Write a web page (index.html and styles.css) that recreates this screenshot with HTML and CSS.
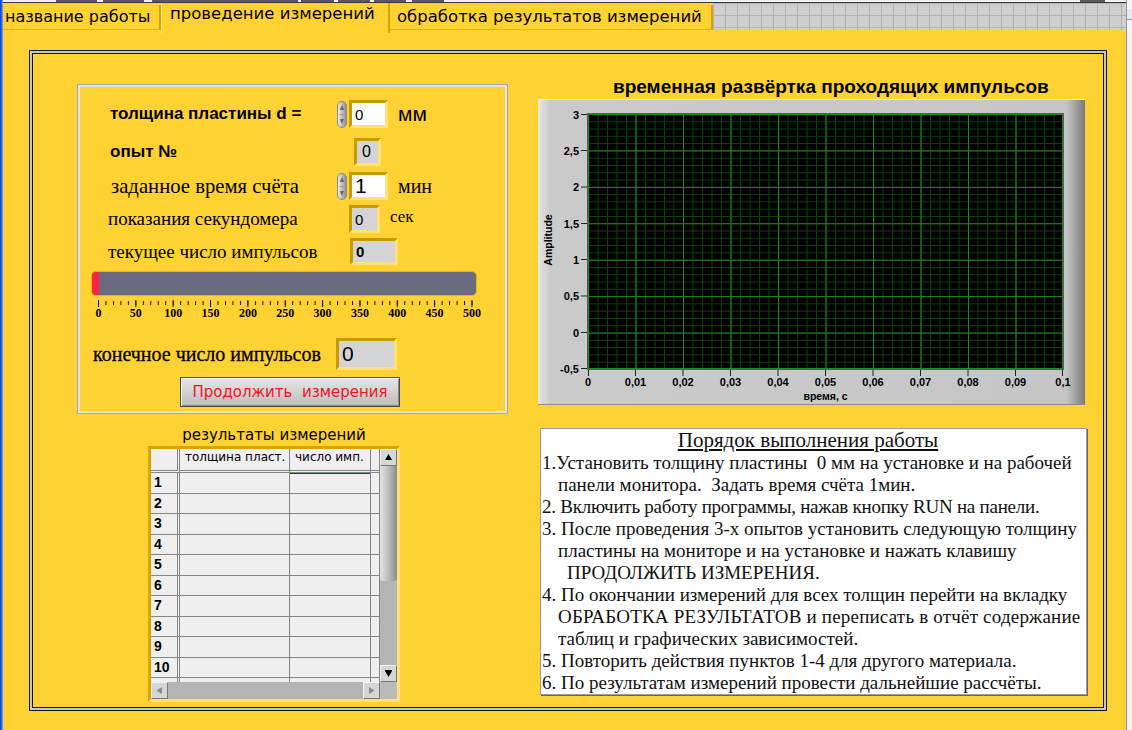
FILE: index.html
```html
<!DOCTYPE html>
<html lang="ru">
<head>
<meta charset="UTF-8">
<title>проведение измерений</title>
<link rel="stylesheet" href="styles.css">
</head>
<body>

<div class="edge-left"></div>

<div class="app">
	<div class="topline">
		<span class="seg" style="margin-left:53px;width:41px"></span>
		<span class="seg" style="margin-left:6px;width:41px"></span>
		<span class="seg" style="margin-left:8px;width:146px"></span>
		<span class="seg" style="margin-left:3px;width:33px"></span>
		<span class="seg" style="margin-left:4px;width:32px"></span>
		<span class="seg" style="margin-left:4px;width:32px"></span>
		<span class="seg" style="margin-left:6px;width:32px"></span>
		<span class="seg" style="margin-left:636px;width:25px"></span>
	</div>

	<!-- tabs -->
	<div class="tabbar">
		<div class="tab first">название работы</div>
		<div class="tab active">проведение измерений</div>
		<div class="tab last">обработка результатов измерений</div>
		<div class="tab-fill"></div>
	</div>

	<div class="panel">
		<div class="frame">

			<!-- left: controls and table -->
			<div class="col-left">
				<div class="ctrl-box">
					<div class="row r1">
						<span class="lbl b">толщина пластины d =</span>
						<svg class="spin" viewBox="0 0 10 27">
							<defs><linearGradient id="sp1" x1="0" x2="1"><stop offset="0" stop-color="#f2f2f2"/><stop offset="1" stop-color="#8a8a8a"/></linearGradient></defs>
							<rect x="0.5" y="0.5" width="9" height="26" rx="4.5" fill="url(#sp1)" stroke="#8c8c8c"/>
							<path d="M5 4L2.8 9h4.4z" fill="#6e6e6e"/>
							<path d="M2 13.5h6" stroke="#9a9a9a"/>
							<path d="M5 23L2.8 18h4.4z" fill="#6e6e6e"/>
						</svg>
						<span class="num ctl w39">0</span>
						<span class="unit mm">мм</span>
					</div>
					<div class="row r2">
						<span class="lbl b">опыт №</span>
						<span class="num w27 f16">0</span>
					</div>
					<div class="row r3">
						<span class="lbl s wide">заданное время счёта</span>
						<svg class="spin" viewBox="0 0 10 27">
							<defs><linearGradient id="sp2" x1="0" x2="1"><stop offset="0" stop-color="#f2f2f2"/><stop offset="1" stop-color="#8a8a8a"/></linearGradient></defs>
							<rect x="0.5" y="0.5" width="9" height="26" rx="4.5" fill="url(#sp2)" stroke="#8c8c8c"/>
							<path d="M5 4L2.8 9h4.4z" fill="#6e6e6e"/>
							<path d="M2 13.5h6" stroke="#9a9a9a"/>
							<path d="M5 23L2.8 18h4.4z" fill="#6e6e6e"/>
						</svg>
						<span class="num ctl w39 big">1</span>
						<span class="unit s">мин</span>
					</div>
					<div class="row r4">
						<span class="lbl s">показания секундомера</span>
						<span class="num w31">0</span>
						<span class="unit s sm">сек</span>
					</div>
					<div class="row r5">
						<span class="lbl s">текущее число импульсов</span>
						<span class="num w48 bold">0</span>
					</div>

					<div class="bar"><div class="bar-fill"></div></div>
					<svg class="scale" viewBox="0 0 410 22">
						<defs>
							<pattern id="tk-min" x="18" y="0" width="7.47" height="22" patternUnits="userSpaceOnUse">
								<path d="M0 2V6" stroke="#111" stroke-width="2"/>
							</pattern>
							<pattern id="tk-maj" x="18" y="0" width="37.35" height="22" patternUnits="userSpaceOnUse">
								<path d="M0 1V8" stroke="#111" stroke-width="2"/>
							</pattern>
						</defs>
						<rect x="18" y="0" width="375" height="9" fill="url(#tk-min)"/>
						<rect x="18" y="0" width="375" height="9" fill="url(#tk-maj)"/>
						<g class="scale-lbl" text-anchor="middle">
							<text x="18.5" y="18">0</text>
							<text x="55.8" y="18">50</text>
							<text x="93.2" y="18">100</text>
							<text x="130.5" y="18">150</text>
							<text x="167.9" y="18">200</text>
							<text x="205.2" y="18">250</text>
							<text x="242.6" y="18">300</text>
							<text x="279.9" y="18">350</text>
							<text x="317.3" y="18">400</text>
							<text x="354.6" y="18">450</text>
							<text x="392" y="18">500</text>
						</g>
					</svg>

					<div class="row r6">
						<span class="lbl s bolder">конечное число импульсов</span>
						<span class="num w61 big">0</span>
					</div>
					<div class="btn">Продолжить&nbsp; измерения</div>
				</div>

				<div class="tbl-title">результаты измерений</div>
				<div class="tbl-frame">
					<div class="tbl-main">
						<div class="tbl-view">
							<div class="tbl-grid">
								<div class="c hd rh"></div>
								<div class="c hd">толщина пласт.</div>
								<div class="c hd">число имп.</div>
								<div class="c hd"></div>

								<div class="c rh">1</div><div class="c"></div><div class="c sel"></div><div class="c"></div>
								<div class="c rh">2</div><div class="c"></div><div class="c"></div><div class="c"></div>
								<div class="c rh">3</div><div class="c"></div><div class="c"></div><div class="c"></div>
								<div class="c rh">4</div><div class="c"></div><div class="c"></div><div class="c"></div>
								<div class="c rh">5</div><div class="c"></div><div class="c"></div><div class="c"></div>
								<div class="c rh">6</div><div class="c"></div><div class="c"></div><div class="c"></div>
								<div class="c rh">7</div><div class="c"></div><div class="c"></div><div class="c"></div>
								<div class="c rh">8</div><div class="c"></div><div class="c"></div><div class="c"></div>
								<div class="c rh">9</div><div class="c"></div><div class="c"></div><div class="c"></div>
								<div class="c rh">10</div><div class="c"></div><div class="c"></div><div class="c"></div>
								<div class="c rh">11</div><div class="c"></div><div class="c"></div><div class="c"></div>
							</div>
						</div>
						<div class="vscroll">
							<div class="sb-btn"><svg width="9" height="9" viewBox="0 0 9 9"><path d="M4.5 1L1 7h7z" fill="#000"/></svg></div>
							<div class="thumb"></div>
							<div class="track"></div>
							<div class="sb-btn"><svg width="9" height="9" viewBox="0 0 9 9"><path d="M4.5 8L1 2h7z" fill="#000"/><path d="M1 1.5h7" stroke="#000"/></svg></div>
						</div>
					</div>
					<div class="hscroll-row">
						<div class="hscroll">
							<div class="sb-btn"><svg width="9" height="9" viewBox="0 0 9 9"><path d="M1.5 4.5L7 1v7z" fill="#8a8a8a"/></svg></div>
							<div class="sb-btn"><svg width="9" height="9" viewBox="0 0 9 9"><path d="M7.5 4.5L2 1v7z" fill="#8a8a8a"/></svg></div>
						</div>
						<div class="corner"></div>
					</div>
				</div>
			</div>

			<!-- right: graph and instructions -->
			<div class="col-right">
				<div class="graph-title">временная развёртка проходящих импульсов</div>
				<div class="graph">
					<svg width="547" height="306" viewBox="0 0 547 306">
						<defs>
							<pattern id="g-min" x="50" y="15" width="9.5" height="7.2857" patternUnits="userSpaceOnUse">
								<path d="M0 0V7.2857M0 0H9.5" stroke="#0d420d" stroke-width="2" fill="none"/>
							</pattern>
							<pattern id="g-maj" x="50" y="15" width="47.5" height="36.4286" patternUnits="userSpaceOnUse">
								<path d="M0 0V36.4286M0 0H47.5" stroke="#1c8c1c" stroke-width="2" fill="none"/>
							</pattern>
						</defs>
						<rect x="49.5" y="14.5" width="476" height="256" fill="#000" stroke="#5a5a5a"/>
						<rect x="50" y="15" width="475" height="255" fill="url(#g-min)"/>
						<rect x="50" y="15" width="475" height="255" fill="url(#g-maj)"/>
						<path d="M524.5 15V270M50 269.5H525" stroke="#1c8c1c"/>

						<path class="ticks" d="M43 15.5h6M43 51.5h6M43 88h6M43 124.5h6M43 160.5h6M43 197h6M43 233.5h6M43 269.5h6
							M50.5 271v6M97.5 271v6M145 271v6M192.5 271v6M240 271v6M287.5 271v6M335 271v6M382.5 271v6M430 271v6M477.5 271v6M524.5 271v6"/>

						<g class="ax" text-anchor="end">
							<text x="41" y="19.5">3</text>
							<text x="41" y="55.5">2,5</text>
							<text x="41" y="92">2</text>
							<text x="41" y="128.5">1,5</text>
							<text x="41" y="164.5">1</text>
							<text x="41" y="201">0,5</text>
							<text x="41" y="237.5">0</text>
							<text x="41" y="273.5">-0,5</text>
						</g>
						<g class="ax" text-anchor="middle">
							<text x="50" y="287">0</text>
							<text x="97.5" y="287">0,01</text>
							<text x="145" y="287">0,02</text>
							<text x="192.5" y="287">0,03</text>
							<text x="240" y="287">0,04</text>
							<text x="287.5" y="287">0,05</text>
							<text x="335" y="287">0,06</text>
							<text x="382.5" y="287">0,07</text>
							<text x="430" y="287">0,08</text>
							<text x="477.5" y="287">0,09</text>
							<text x="525" y="287">0,1</text>
						</g>
						<text class="ax-name" x="287.5" y="301" text-anchor="middle">время, с</text>
						<text class="ax-name" transform="translate(14 141) rotate(-90)" text-anchor="middle">Amplitude</text>
					</svg>
				</div>

				<div class="instr">
					<div class="instr-title">Порядок выполнения работы</div>
					<div class="ln">1.Установить толщину пластины &nbsp;0 мм на установке и на рабочей</div>
					<div class="ln in">панели монитора. &nbsp;Задать время счёта 1мин.</div>
					<div class="ln tight">2. Включить работу программы, нажав кнопку RUN на панели.</div>
					<div class="ln">3. После проведения 3-х опытов установить следующую толщину</div>
					<div class="ln in">пластины на мониторе и на установке и нажать клавишу</div>
					<div class="ln in2">ПРОДОЛЖИТЬ ИЗМЕРЕНИЯ.</div>
					<div class="ln">4. По окончании измерений для всех толщин перейти на вкладку</div>
					<div class="ln in loose">ОБРАБОТКА РЕЗУЛЬТАТОВ и переписать в отчёт содержание</div>
					<div class="ln in">таблиц и графических зависимостей.</div>
					<div class="ln">5. Повторить действия пунктов 1-4 для другого материала.</div>
					<div class="ln">6. По результатам измерений провести дальнейшие рассчёты.</div>
				</div>
			</div>

		</div>
	</div>
</div>

<div class="edge-right"><span class="edge-btn"></span></div>

</body>
</html>
```

FILE: styles.css
```css
/* *** Page *** */
body {
	margin: 0;
	width: 1132px;
	height: 730px;
	overflow: hidden;
	display: flex;
	background: #ffd233;
	font-family: "Liberation Sans", Arial, sans-serif;
	color: #000;
}

.edge-left {
	width: 3px;
	background: linear-gradient(to right, #0a3ac0, #2d6ef0 60%, #86aef6);
}

.edge-right {
	width: 6px;
	box-sizing: border-box;
	background: #f4f4f4;
	border-left: 1px solid #9a9a9a;
}

.edge-btn {
	display: block;
	margin-top: 8px;
	height: 10px;
	background: #e2e8f4;
	border-top: 1px solid #fff;
	border-bottom: 1px solid #8896b8;
}

.app {
	width: 1123px;
	display: flex;
	flex-direction: column;
}

.topline {
	height: 3px;
	box-sizing: border-box;
	display: flex;
	background: #f2f2f2;
	border-bottom: 1px solid #3a3a3a;
}

.seg {
	height: 2px;
	background: #5a5a5a;
}


/* *** Tabs *** */
.tabbar {
	height: 27px;
	display: flex;
	align-items: flex-start;
	background: #ffd233;
}

.tab {
	box-sizing: border-box;
	height: 25px;
	margin-top: 2px;
	font-family: "DejaVu Sans", sans-serif;
	font-size: 16.5px;
	line-height: 24px;
	white-space: nowrap;
	overflow: hidden;
	background: #ffd233;
	border-right: 2px solid #d9a300;
	border-bottom: 1px solid #e8b400;
}

.tab.first {
	width: 158px;
	padding-left: 2px;
	font-size: 16px;
}

.tab.active {
	position: relative;
	z-index: 2;
	width: 229px;
	height: 30px;
	margin-top: 0;
	padding-left: 8px;
	line-height: 22px;
	border-left: 1px solid #ffe98a;
	border-bottom: none;
}

.tab.last {
	width: 323px;
	padding-left: 7px;
}

.tab-fill {
	flex: 1;
	height: 27px;
	background-color: #cfcfcf;
	background-image:
		linear-gradient(to right, #b2b2b2 1px, transparent 1px),
		linear-gradient(to bottom, #b2b2b2 1px, transparent 1px);
	background-size: 12px 12px;
}


/* *** Panel *** */
.panel {
	flex: 1;
	padding: 20px 0 0 26px;
	background: #ffd233;
}

.frame {
	box-sizing: border-box;
	width: 1078px;
	height: 661px;
	border: 1px solid #151515;
	box-shadow: inset 0 0 0 2px #c8c8c8, inset 0 0 0 3px #151515;
	display: flex;
	align-items: flex-start;
	padding: 23px 0 0 48px;
}

.col-left {
	width: 429px;
	margin-top: 11px;
}

.col-right {
	width: 549px;
	margin-left: 31px;
}


/* *** Controls *** */
.ctrl-box {
	box-sizing: border-box;
	height: 328px;
	border: 2px solid #e4e4e4;
	box-shadow: 0 0 0 1px #a8a8a8;
}

.row {
	display: flex;
	align-items: center;
}

.lbl {
	flex: none;
	white-space: nowrap;
}

.lbl.b {
	font-weight: bold;
	font-size: 17px;
}

.lbl.s {
	font-family: "Liberation Serif", serif;
	font-size: 19px;
}

.lbl.s.wide { font-size: 20.7px; }

.lbl.bolder {
	font-size: 20px;
	-webkit-text-stroke: 0.3px #000;
}

.spin {
	width: 10px;
	height: 27px;
	margin-right: 2px;
	flex: none;
}

.num {
	box-sizing: border-box;
	height: 28px;
	display: flex;
	align-items: center;
	padding-left: 3px;
	border: 3px solid;
	border-color: #c99a00 #ffe07a #ffe07a #c99a00;
	background: #d4d4d4;
	font-size: 15px;
}

.num.ctl { background: #fff; }
.num.big { font-size: 21px; }
.num.bold { font-weight: bold; }
.num.f16 { font-size: 16px; padding-left: 5px; }

.w27 { width: 27px; }
.w31 { width: 31px; }
.w39 { width: 39px; }
.w48 { width: 48px; }
.w61 { width: 61px; height: 32px; }

.unit {
	margin-left: 10px;
	white-space: nowrap;
}

.unit.mm { font-size: 21px; }
.unit.s { font-family: "Liberation Serif", serif; font-size: 20px; }
.unit.sm { font-size: 17px; margin-top: -4px; }

.r1 { margin-top: 13px; height: 28px; padding-left: 30px; }
.r1 .lbl { width: 227px; }

.r2 { margin-top: 10px; height: 28px; padding-left: 30px; }
.r2 .lbl { width: 244px; }

.r3 { margin-top: 6px; height: 28px; padding-left: 31px; }
.r3 .lbl { width: 226px; }

.r4 { margin-top: 5px; height: 28px; padding-left: 28px; }
.r4 .lbl { width: 241px; }

.r5 { margin-top: 5px; height: 27px; padding-left: 28px; }
.r5 .lbl { width: 242px; }
.r5 .num { height: 27px; }

.r6 { margin-top: 17px; height: 32px; padding-left: 13px; }
.r6 .lbl { width: 243px; }

.bar {
	box-sizing: border-box;
	width: 386px;
	height: 25px;
	margin: 6px 0 0 11px;
	border-radius: 5px;
	background: #6a6a82;
	border: 1px solid #e9b800;
	overflow: hidden;
}

.bar-fill {
	width: 7px;
	height: 100%;
	background: #ff2243;
}

.scale {
	display: block;
	width: 410px;
	height: 22px;
	margin-top: 3px;
}

.scale-lbl {
	font-family: "Liberation Serif", serif;
	font-weight: bold;
	font-size: 12px;
	fill: #000;
}

.btn {
	box-sizing: border-box;
	width: 220px;
	height: 30px;
	margin: 7px 0 0 100px;
	display: flex;
	align-items: center;
	justify-content: center;
	background: linear-gradient(#e6e6e6, #bcbcbc);
	border: 1px solid #4a4a4a;
	box-shadow: inset 1px 1px 0 #fafafa, inset -1px -1px 0 #8a8a8a;
	font-family: "DejaVu Sans", sans-serif;
	font-size: 15px;
	color: #f01424;
	white-space: nowrap;
}


/* *** Results table *** */
.tbl-title {
	width: 252px;
	height: 20px;
	margin: 12px 0 0 70px;
	text-align: center;
	font-family: "DejaVu Sans", sans-serif;
	font-size: 15px;
	line-height: 20px;
}

.tbl-frame {
	box-sizing: border-box;
	width: 252px;
	height: 256px;
	margin: 1px 0 0 70px;
	border: 3px solid;
	border-color: #d9a300 #ffe07a #ffe07a #d9a300;
}

.tbl-main {
	display: flex;
	height: 233px;
}

.tbl-view {
	width: 229px;
	overflow: hidden;
	background: #efefef;
}

.tbl-grid {
	display: grid;
	grid-template-columns: 29px 110px 81px 9px;
	grid-template-rows: 24px;
	grid-auto-rows: 20.5px;
}

.c {
	box-sizing: border-box;
	background: #efefef;
	border-right: 1px solid #858585;
	border-bottom: 1px solid #858585;
	padding-left: 3px;
	font-weight: bold;
	font-size: 14px;
	line-height: 19px;
	overflow: hidden;
}

.c.rh { border-right: 3px double #858585; }

.c.hd {
	border-bottom: 3px double #858585;
	font-family: "DejaVu Sans", sans-serif;
	font-weight: normal;
	font-size: 12px;
	line-height: 17px;
	padding-left: 5px;
	white-space: nowrap;
}

.c.sel { box-shadow: inset 0 1px 0 #1a2fd4; }

.vscroll {
	width: 17px;
	display: flex;
	flex-direction: column;
	background: #b4b4b4;
}

.sb-btn {
	box-sizing: border-box;
	width: 17px;
	height: 17px;
	display: flex;
	align-items: center;
	justify-content: center;
	background: #d6d6d6;
	border: 1px solid;
	border-color: #f2f2f2 #777 #777 #f2f2f2;
}

.thumb {
	height: 115px;
	background: linear-gradient(to right, #e4e4e4, #c0c0c0 45%, #8c8c8c);
	border-radius: 0 0 3px 3px;
}

.track { flex: 1; }

.hscroll-row {
	display: flex;
	height: 17px;
}

.hscroll {
	width: 229px;
	display: flex;
	justify-content: space-between;
	background: #b4b4b4;
}

.corner {
	width: 17px;
	background: #bababa;
}


/* *** Graph *** */
.graph-title {
	height: 25px;
	padding-left: 75px;
	font-weight: bold;
	font-size: 19px;
	line-height: 25px;
	white-space: nowrap;
}

.graph {
	width: 547px;
	height: 306px;
	background: linear-gradient(to right, #e8e8e8 0, #cacaca 12px, #c6c6c6 528px, #a4a4a4 537px, #7a7a7a 547px);
	box-shadow: inset 0 1px 0 #e6e6e6, inset 0 -1px 0 #8a8a8a;
}

.graph svg { display: block; }

.ticks {
	stroke: #222;
	fill: none;
}

.ax {
	font-weight: bold;
	font-size: 11px;
	fill: #000;
}

.ax-name {
	font-weight: bold;
	font-size: 10.5px;
	fill: #000;
}


/* *** Instructions *** */
.instr {
	box-sizing: border-box;
	width: 547px;
	height: 267px;
	margin: 23px 0 0 2px;
	padding-left: 1px;
	background: #fff;
	border: 1px solid #9c9c9c;
	box-shadow: 1px 1px 0 #666;
	font-family: "Liberation Serif", serif;
	font-size: 19px;
	color: #111;
	overflow: hidden;
}

.instr-title {
	padding-right: 12px;
	text-align: center;
	font-size: 21px;
	line-height: 23px;
	text-decoration: underline;
}

.ln {
	line-height: 22px;
	white-space: nowrap;
}

.ln.in { padding-left: 16px; }
.ln.in2 { padding-left: 25px; }
.ln.tight { letter-spacing: -0.25px; }
.ln.loose { letter-spacing: 0.2px; }
```
